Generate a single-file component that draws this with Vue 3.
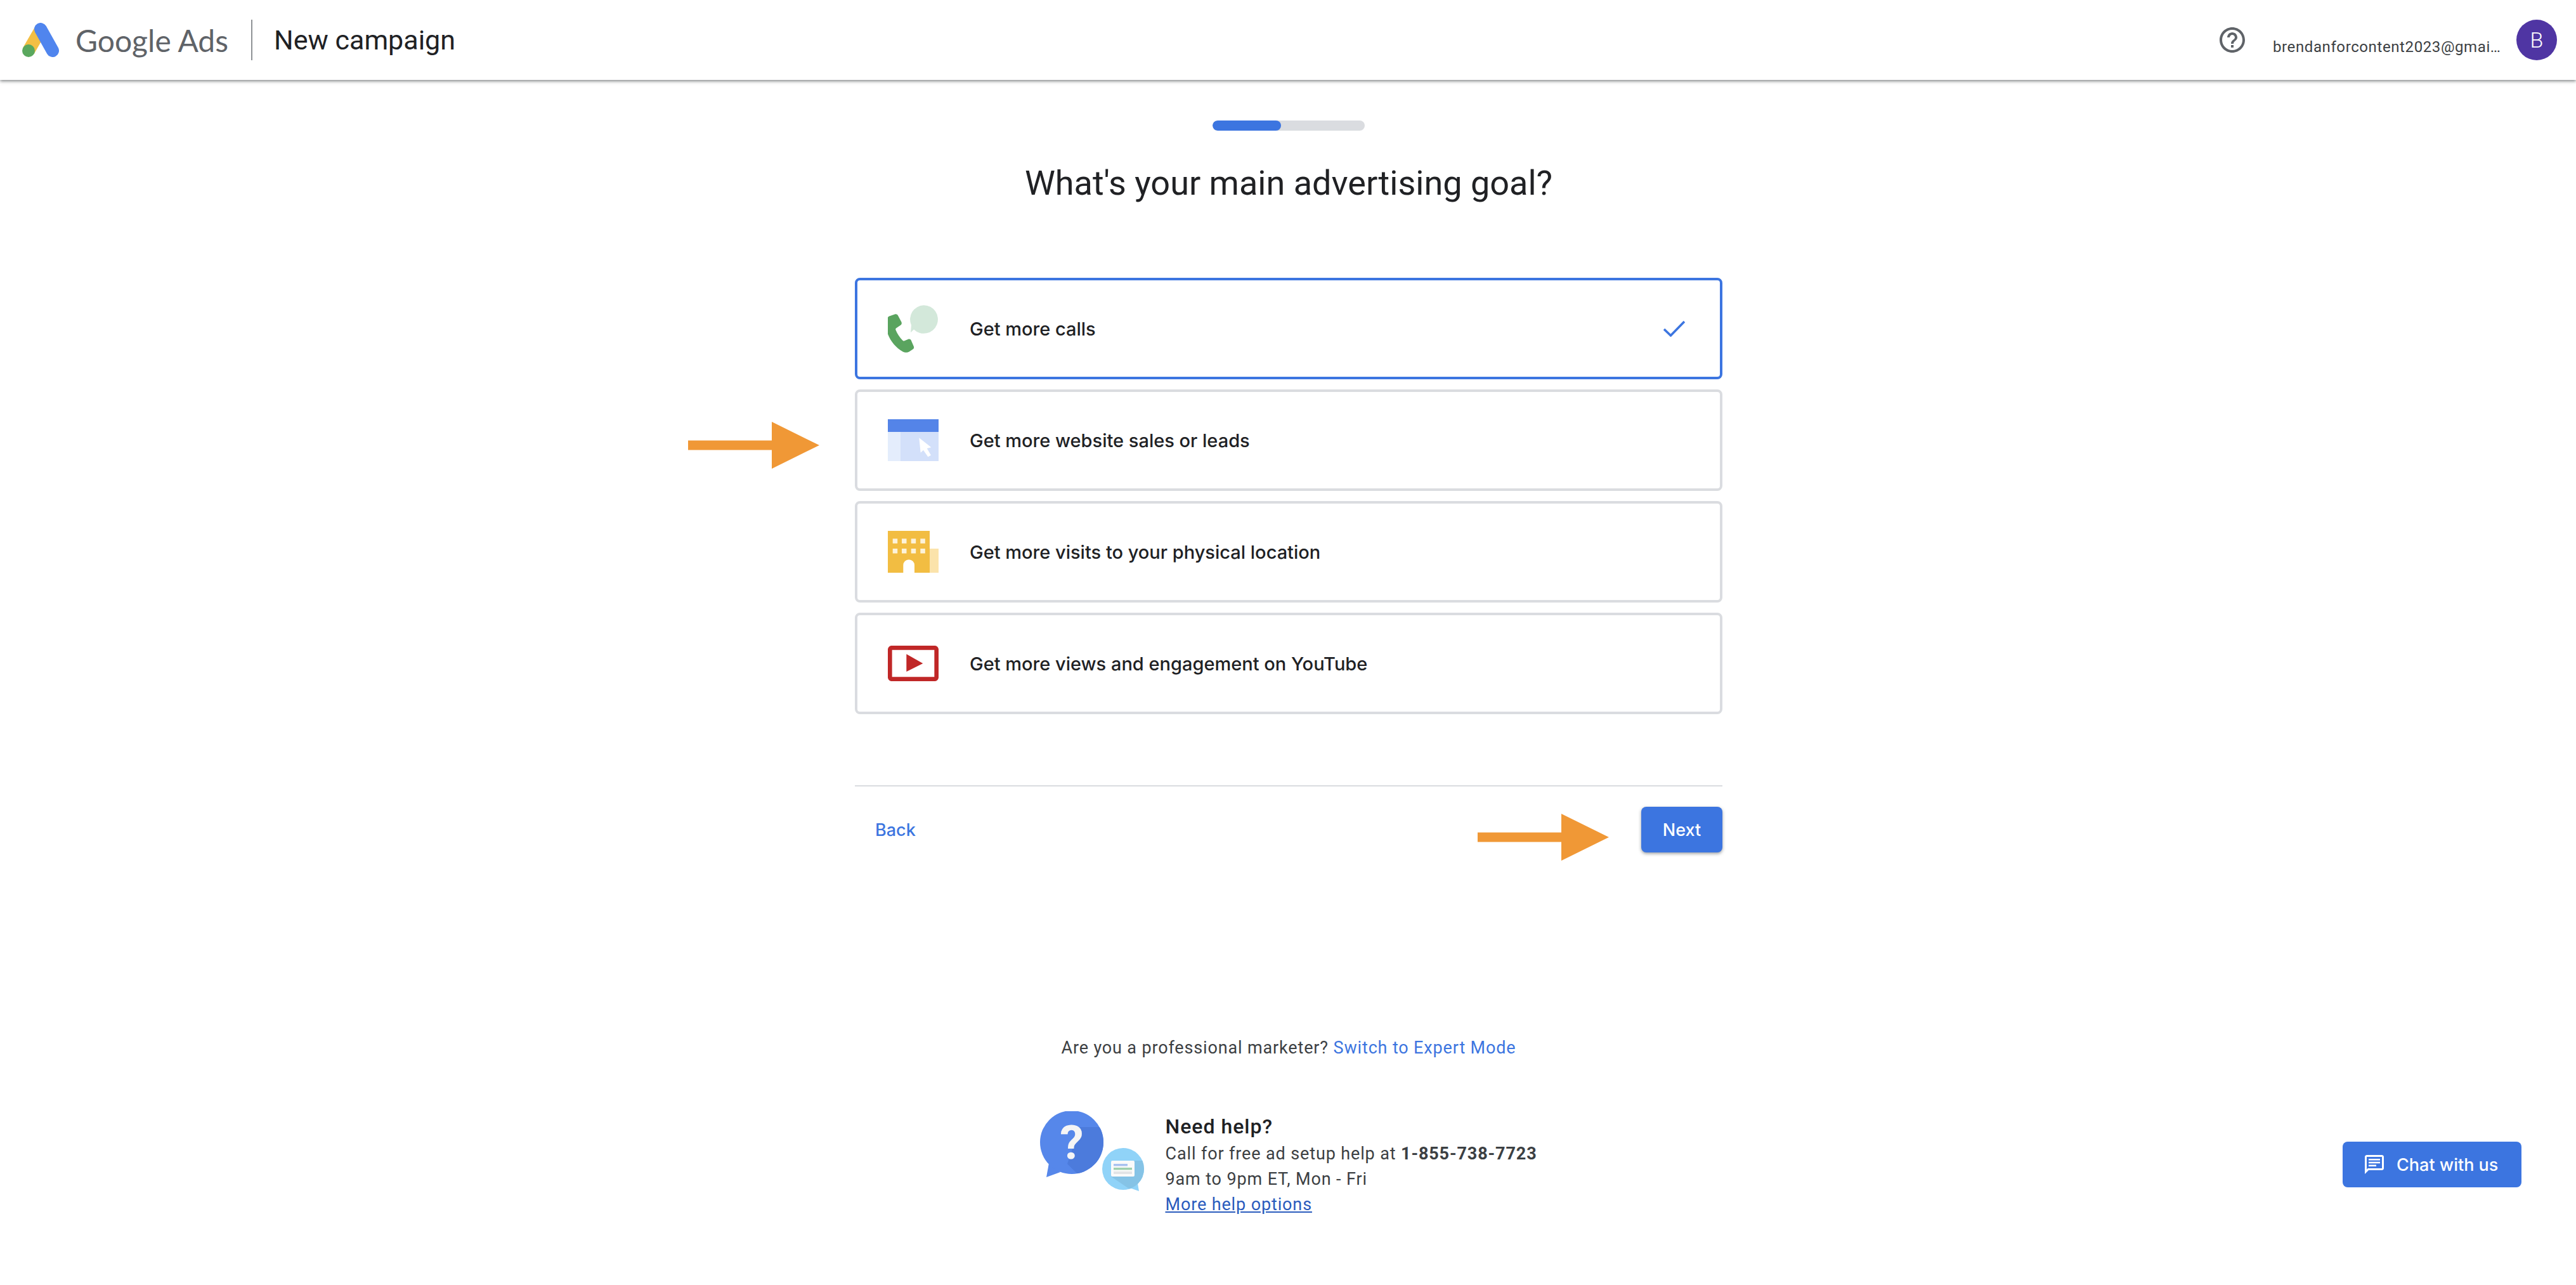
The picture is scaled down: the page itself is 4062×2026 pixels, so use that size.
<script setup>
const goals = [
  { key: 'calls', label: 'Get more calls', selected: true },
  { key: 'web', label: 'Get more website sales or leads' },
  { key: 'visit', label: 'Get more visits to your physical location' },
  { key: 'yt', label: 'Get more views and engagement on YouTube' }
]
</script>

<template>
  <div class="page">
    <header class="top">
      <svg class="logo" viewBox="35 33 58 54" width="58" height="54">
        <path d="M64 44 L45 77" stroke="#f3bf44" stroke-width="20" fill="none" />
        <path d="M64 43 L83 77" stroke="#5085ee" stroke-width="20" stroke-linecap="round" fill="none" />
        <ellipse cx="45" cy="77" rx="10" ry="10" fill="#5aa85e" />
      </svg>
      <span class="brand">Google Ads</span>
      <span class="vr"></span>
      <span class="crumb">New campaign</span>
      <svg class="help-ic" viewBox="0 0 24 24" width="48" height="48">
        <path fill="#5f6368" d="M11 18h2v-2h-2v2zm1-16C6.48 2 2 6.48 2 12s4.48 10 10 10 10-4.48 10-10S17.52 2 12 2zm0 18c-4.41 0-8-3.59-8-8s3.59-8 8-8 8 3.59 8 8-3.59 8-8 8zm0-14c-2.21 0-4 1.79-4 4h2c0-1.1.9-2 2-2s2 .9 2 2c0 2-3 1.75-3 5h2c0-2.25 3-2.5 3-5 0-2.21-1.79-4-4-4z" />
      </svg>
      <span class="email">brendanforcontent2023@gmai…</span>
      <span class="avatar">B</span>
    </header>

    <main class="main">
      <div class="progress"><div class="progress-fill"></div></div>
      <h1 class="title">What's your main advertising goal?</h1>

      <div class="options">
        <div v-for="g in goals" :key="g.key" class="option" :class="{ selected: g.selected }">
          <svg v-if="g.key === 'calls'" class="ic" viewBox="210 180 240 230" width="80" height="77">
            <path fill="#d3e8da" d="M380 183a67 67 0 1 1-47 115l-15 14 3-35a67 67 0 0 1 59-94z" />
            <path fill="#5aa45f" d="M243 226c6-2 12 0 15 6l16 30c3 6 1 12-3 15l-22 15c-3 2-3 6-1 10 7 17 18 33 32 48 3 3 6 3 9 1l18-7c5-2 10 0 13 5l12 28c3 6 1 12-4 15l-17 11c-9 5-20 5-30 0-42-25-71-65-80-116-3-20 1-40 14-51z" />
          </svg>
          <svg v-else-if="g.key === 'web'" class="ic" viewBox="0 0 80 66" width="80" height="66">
            <rect width="80" height="66" fill="#d3e0fa" />
            <rect y="20" width="20" height="46" fill="#e4edfc" />
            <rect width="80" height="20" fill="#5484e8" />
            <path fill="#fff" d="M49.3 29.3 51.7 52.7 56 48.7 63.3 59.3 68 56.7 61.7 46 68.3 44.3z" />
          </svg>
          <svg v-else-if="g.key === 'visit'" class="ic" viewBox="0 0 80 66" width="80" height="66">
            <rect x="66" y="28" width="14" height="38" fill="#fbe3ab" />
            <rect width="66" height="66" fill="#f2bd42" />
            <g fill="#fdf3da">
              <rect x="7.7" y="12.3" width="7.5" height="7.5" /><rect x="22" y="12.3" width="7.5" height="7.5" />
              <rect x="36.7" y="12.3" width="7.5" height="7.5" /><rect x="51.3" y="12.3" width="7.5" height="7.5" />
              <rect x="7.7" y="28" width="7.5" height="7.5" /><rect x="22" y="28" width="7.5" height="7.5" />
              <rect x="36.7" y="28" width="7.5" height="7.5" /><rect x="51.3" y="28" width="7.5" height="7.5" />
            </g>
            <path fill="#fff" d="M24.3 66V54a8.8 8.8 0 0 1 17.7 0v12z" />
          </svg>
          <svg v-else class="ic" viewBox="0 0 80 56" width="80" height="56">
            <rect x="3.3" y="3.3" width="73.4" height="49.4" rx="3" fill="none" stroke="#c02727" stroke-width="6.7" />
            <path fill="#c02727" d="M29.3 13.3 55.3 28 29.3 41z" />
          </svg>
          <span class="option-label">{{ g.label }}</span>
          <svg v-if="g.selected" class="check" viewBox="0 0 34 26" width="34" height="26">
            <path d="M1 14 11.5 24 33 2" fill="none" stroke="#3c75e0" stroke-width="3.6" />
          </svg>
        </div>
      </div>

      <hr class="rule" />
      <div class="actions">
        <a class="back">Back</a>
        <button class="next">Next</button>
      </div>

      <p class="expert">Are you a professional marketer? <a>Switch to Expert Mode</a></p>

      <div class="help">
        <svg class="help-art" viewBox="1642 1752 164 126" width="164" height="126">
          <defs>
            <clipPath id="bigClip"><circle cx="1692" cy="1801" r="50" /></clipPath>
            <clipPath id="smallClip"><circle cx="1773" cy="1843" r="33" /></clipPath>
          </defs>
          <path fill="#5687ea" d="M1652 1856l4-22 18 14z" />
          <circle cx="1692" cy="1801" r="50" fill="#5687ea" />
          <path clip-path="url(#bigClip)" fill="#4c7bdc" d="M1705 1777l40 0 0 80-38 0-22-22z" />
          <text x="1692" y="1827" text-anchor="middle" class="q">?</text>
          <path fill="#90d3f8" d="M1798 1878l-3-18-14 12z" />
          <circle cx="1773" cy="1843" r="33" fill="#90d3f8" />
          <path clip-path="url(#smallClip)" fill="#85c3e6" d="M1791 1830l20 0 0 50-20 0-37-25z" />
          <rect x="1754" y="1830" width="37" height="25" rx="2" fill="#fafafa" />
          <rect x="1758" y="1835" width="22" height="3.5" fill="#a9c2f0" />
          <rect x="1758" y="1841" width="29" height="3.5" fill="#9fd0ae" />
          <rect x="1758" y="1847" width="29" height="4" fill="#e2e4e6" />
        </svg>
        <div class="help-text">
          <div class="help-head">Need help?</div>
          <div class="help-line">Call for free ad setup help at <b>1-855-738-7723</b></div>
          <div class="help-line">9am to 9pm ET, Mon - Fri</div>
          <a class="help-line help-link">More help options</a>
        </div>
      </div>
    </main>

    <svg class="arrow arrow-a" viewBox="0 0 207 74" width="207" height="74">
      <path fill="#f09836" d="M0 29.5h132V0l75 37-75 37V44.5H0z" />
    </svg>
    <svg class="arrow arrow-b" viewBox="0 0 207 74" width="207" height="74">
      <path fill="#f09836" d="M0 29.5h132V0l75 37-75 37V44.5H0z" />
    </svg>

    <button class="chat">
      <svg viewBox="0 0 24 24" width="36" height="36">
        <path fill="#fff" d="M20 2H4c-1.1 0-2 .9-2 2v18l4-4h14c1.1 0 2-.9 2-2V4c0-1.1-.9-2-2-2zm0 14H5.2L4 17.2V4h16v12z" />
        <path fill="#fff" d="M6 6h12v1.6H6zM6 9.2h12v1.6H6zM6 12.4h8V14H6z" />
      </svg>
      <span>Chat with us</span>
    </button>
  </div>
</template>

<style>
html, body { margin: 0; background: #fff; }
</style>

<style scoped>
.page {
  position: relative;
  width: 4062px;
  height: 2026px;
  overflow: hidden;
  background: #fff;
  font-family: Roboto, "Liberation Sans", sans-serif;
  color: #202124;
}
.top {
  display: flex;
  align-items: center;
  height: 126px;
  padding: 0 30px 0 35px;
  box-sizing: border-box;
  background: #fff;
  box-shadow: 0 2px 5px rgba(60, 64, 67, 0.65);
}
.logo { flex: none; }
.brand {
  margin-left: 26px;
  font: 400 48px Lato, sans-serif;
  color: #5f6368;
  white-space: nowrap;
}
.vr {
  width: 2px;
  height: 64px;
  margin-left: 36px;
  background: #8f9296;
}
.crumb {
  margin-left: 34px;
  font: 400 43px Roboto, sans-serif;
  white-space: nowrap;
}
.help-ic { margin-left: auto; flex: none; }
.email {
  margin-left: 40px;
  margin-top: 22px;
  width: 357px;
  font-size: 24px;
  letter-spacing: 0.6px;
  color: #3c4043;
  white-space: nowrap;
}
.avatar {
  flex: none;
  width: 64px;
  height: 64px;
  margin-left: 27px;
  border-radius: 50%;
  background: #4f35a3;
  color: #fff;
  font-size: 34px;
  font-weight: 300;
  display: flex;
  align-items: center;
  justify-content: center;
}
.main {
  display: flex;
  flex-direction: column;
  align-items: center;
  padding: 64px 0 0 2px;
}
.progress {
  width: 240px;
  height: 16px;
  border-radius: 8px;
  background: #dadce0;
  overflow: hidden;
}
.progress-fill {
  width: 108px;
  height: 100%;
  border-radius: 8px;
  background: #3c75e0;
}
.title {
  margin: 51px 0 0;
  font: 400 54px/64px Roboto, sans-serif;
  color: #202124;
  white-space: nowrap;
}
.options {
  margin-top: 117px;
  width: 1368px;
  display: flex;
  flex-direction: column;
  gap: 16px;
}
.option {
  height: 160px;
  box-sizing: border-box;
  display: flex;
  align-items: center;
  padding: 0 55px 0 48px;
  border: 4px solid #dadce0;
  border-radius: 8px;
}
.option.selected { border-color: #3c75e0; }
.ic { flex: none; }
.option-label {
  margin-left: 49px;
  font: 500 29px Inter, sans-serif;
  color: #202124;
  white-space: nowrap;
}
.check { margin-left: auto; flex: none; }
.rule {
  width: 1368px;
  height: 2px;
  margin: 112px 0 0;
  border: 0;
  background: #dadce0;
}
.actions {
  width: 1368px;
  margin-top: 32px;
  display: flex;
  align-items: center;
  justify-content: space-between;
}
.back {
  margin-left: 32px;
  font: 500 27px Inter, sans-serif;
  color: #3c75e0;
}
.next {
  width: 128px;
  height: 72px;
  border: 0;
  border-radius: 8px;
  background: #3c75e0;
  color: #fff;
  font: 500 27px Inter, sans-serif;
  box-shadow: 0 2px 5px rgba(60, 64, 67, 0.5);
}
.expert {
  margin: 288px 0 0;
  font-size: 27px;
  letter-spacing: 0.85px;
  line-height: 40px;
  color: #3c4043;
  white-space: nowrap;
}
.expert a { color: #3c75e0; }
.help {
  margin-top: 80px;
  display: flex;
  align-items: flex-start;
  gap: 33px;
}
.help-art { flex: none; }
.help-text { margin-top: 2px; display: flex; flex-direction: column; align-items: flex-start; }
.help-head {
  font-size: 32px;
  font-weight: 500;
  letter-spacing: 1px;
  line-height: 45px;
  color: #202124;
}
.help-line {
  font-size: 27px;
  letter-spacing: 0.87px;
  line-height: 40px;
  color: #3c4043;
  white-space: nowrap;
}
.help-line b { font-weight: 700; }
.help-link { color: #2a5bbd; text-decoration: underline; }
.q {
  font: 700 75px Roboto, sans-serif;
  fill: #f5f5f5;
}
.arrow { position: absolute; }
.arrow-a { left: 1085px; top: 665px; }
.arrow-b { left: 2330px; top: 1283px; }
.chat {
  position: absolute;
  left: 3694px;
  top: 1800px;
  width: 282px;
  height: 72px;
  border: 0;
  border-radius: 8px;
  background: #3c75e0;
  color: #fff;
  display: flex;
  align-items: center;
  padding: 0 0 0 32px;
  gap: 17px;
  font: 500 27px Inter, sans-serif;
}
</style>
